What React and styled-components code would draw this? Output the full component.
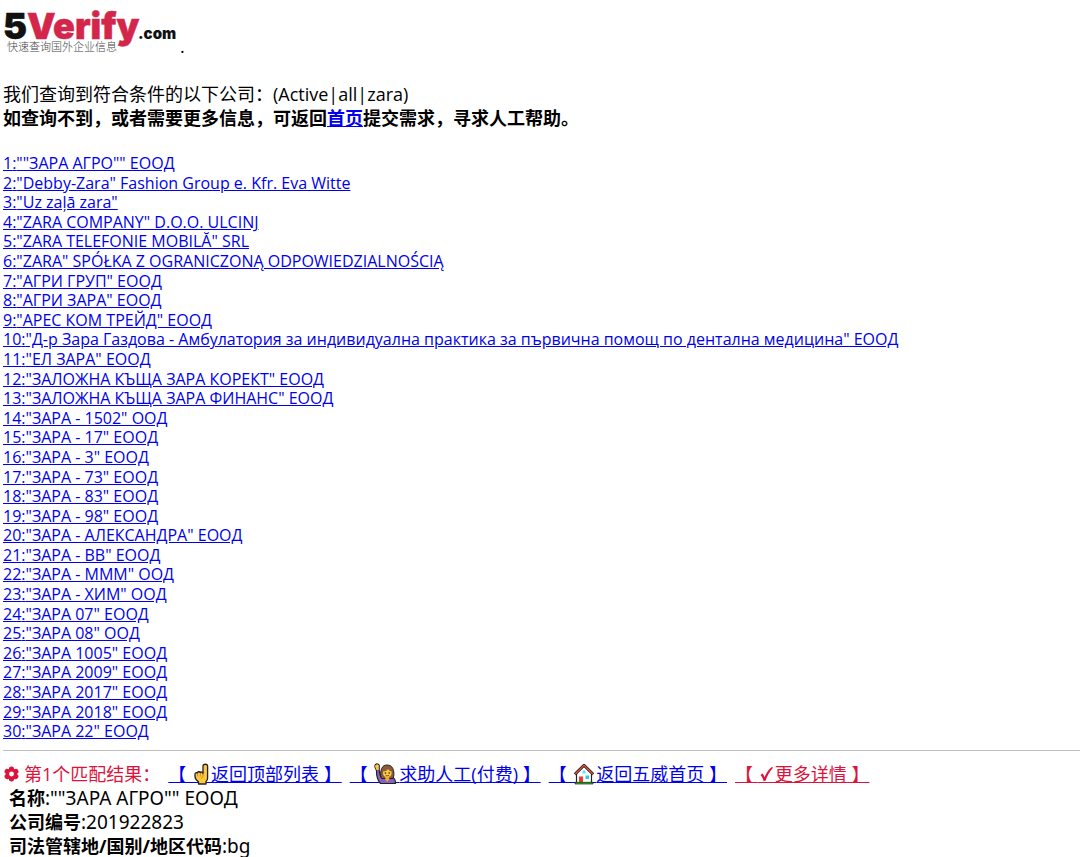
import React from "react";
import styled, { createGlobalStyle } from "styled-components";

const GlobalStyle = createGlobalStyle`
  body {
    margin: 0;
    background: #fff;
    color: #000;
    font-family: "Open Sans", "Noto Sans CJK SC", sans-serif;
    font-size: 18px;
    line-height: 24px;
  }
`;
const Page = styled.div`
  padding-left: 3px;
`;
const Header = styled.header`
  display: flex;
  align-items: flex-end;
  gap: 2px;
`;
const Logo = styled.svg`
  display: block;
  width: 175px;
  height: 58px;
  overflow: visible;
`;
const Intro = styled.div`
  margin-top: 24px;
  p {
    margin: 0;
  }
`;
const Link = styled.a`
  color: ${(props) => (props.$red ? "#dc143c" : "#0000ee")};
  text-decoration: underline;
`;
const List = styled.div`
  margin-top: 24px;
  font-size: 16px;
  line-height: 1.225;
`;
const Row = styled.div``;
const Divider = styled.hr`
  margin: 8px 0 11px;
  border: 0;
  border-top: 1px solid #c0c0c0;
`;
const ResultBar = styled.div`
  display: flex;
  align-items: center;
  gap: 8px;
  white-space: nowrap;
  color: #dc143c;
  a {
    text-decoration-skip-ink: none;
  }
`;
const Title = styled.span`
  display: flex;
  align-items: center;
  gap: 4px;
`;
const Icon = styled.svg`
  width: ${(props) => props.$w}px;
  height: 22px;
  vertical-align: -4px;
`;
const Detail = styled.div`
  padding-left: 6px;
  font-family: "Noto Sans", "Noto Sans CJK SC", sans-serif;
`;
const Value = styled.span`
  font-size: 19px;
`;

const companies = [
  '""ЗАРА АГРО"" ЕООД',
  '"Debby-Zara" Fashion Group e. Kfr. Eva Witte',
  '"Uz zaļā zara"',
  '"ZARA COMPANY" D.O.O. ULCINJ',
  '"ZARA TELEFONIE MOBILĂ" SRL',
  '"ZARA" SPÓŁKA Z OGRANICZONĄ ODPOWIEDZIALNOŚCIĄ',
  '"АГРИ ГРУП" ЕООД',
  '"АГРИ ЗАРА" ЕООД',
  '"АРЕС КОМ ТРЕЙД" ЕООД',
  '"Д-р Зара Газдова - Амбулатория за индивидуална практика за първична помощ по дентална медицина" ЕООД',
  '"ЕЛ ЗАРА" ЕООД',
  '"ЗАЛОЖНА КЪЩА ЗАРА КОРЕКТ" ЕООД',
  '"ЗАЛОЖНА КЪЩА ЗАРА ФИНАНС" ЕООД',
  '"ЗАРА - 1502" ООД',
  '"ЗАРА - 17" ЕООД',
  '"ЗАРА - 3" ЕООД',
  '"ЗАРА - 73" ЕООД',
  '"ЗАРА - 83" ЕООД',
  '"ЗАРА - 98" ЕООД',
  '"ЗАРА - АЛЕКСАНДРА" ЕООД',
  '"ЗАРА - ВВ" ЕООД',
  '"ЗАРА - МММ" ООД',
  '"ЗАРА - ХИМ" ООД',
  '"ЗАРА 07" ЕООД',
  '"ЗАРА 08" ООД',
  '"ЗАРА 1005" ЕООД',
  '"ЗАРА 2009" ЕООД',
  '"ЗАРА 2017" ЕООД',
  '"ЗАРА 2018" ЕООД',
  '"ЗАРА 22" ЕООД',
];

const Flower = () => (
  <Icon $w={17} viewBox="0 0 17 22" aria-hidden="true">
    <g fill="#dc143c">
      {[0, 60, 120, 180, 240, 300].map((a) => (
        <ellipse key={a} cx="8.5" cy="6.4" rx="2.7" ry="3" transform={`rotate(${a} 8.5 11)`} />
      ))}
    </g>
    <circle cx="8.5" cy="11" r="2.4" fill="#fff" />
  </Icon>
);

// carries the link underline behind an icon
const Underline = () => <path d="M-1 19.500h30" stroke="currentColor" strokeWidth="1" />;

const Hand = () => (
  <Icon $w={20} viewBox="-1 0 20 22" aria-hidden="true">
    <Underline />
    <path
      d="M11 10.5V3.2c0-2.6 4.6-2.6 4.6 0V15c0 1.4-.6 2.6-1.6 3.5V21H6.5v-2.3C4.3 17.2 3 15.5 3 13.5v-2.2c0-1.6 1.5-2 2.3-1.3.3-1.5 2.3-1.7 2.9-.4.6-1 2.4-.8 2.8.9z"
      fill="#ffc83d"
      stroke="#222"
      strokeWidth="1.3"
      strokeLinejoin="round"
    />
    <path d="M5.5 10.500v3M8.300 10.200v3.500M11 10.500v3.500l-2 1.500" fill="none" stroke="#b07a1e" strokeWidth=".7" />
  </Icon>
);

const Person = () => (
  <Icon $w={27} viewBox="-1 0 27 22" aria-hidden="true">
    <Underline />
    <path
      d="M7.5 20.500C5 18 3.400 13 3.500 7.500L2 4c-.6-2.300 1-3.200 2.200-3.100C6 1 6.600 2.500 6.200 4v3.500c.3 3 .8 5 1.800 6.500h10.500c3 .6 4 3 4 6.500z"
      fill="#8661c5"
      stroke="#222"
      strokeWidth="1.2"
      strokeLinejoin="round"
    />
    <path d="M3.5 7L2.300 4C1.800 2 3 1.300 4.200 1.400 5.700 1.500 6.100 2.600 5.700 4v3z" fill="#ffc83d" />
    <path
      d="M8.5 15.500C7 12 7.500 8 8.700 5.500 10 2.500 12 2 14 2s4.600.6 5.800 3.500c1.200 2.600 1.700 6.500.2 10z"
      fill="#8a5a3c"
      stroke="#222"
      strokeWidth="1"
    />
    <path d="M12.300 13h3.900v3.600L14.300 19l-2-2.400z" fill="#f2a91e" />
    <path d="M10 8.500c2.500 0 4.200-1 5-2.500 1 1.500 2 2.200 3.600 2.500v1.800c0 5.500-8.600 5.500-8.600 0z" fill="#ffc83d" />
    <circle cx="12.5" cy="10" r=".8" fill="#222" />
    <circle cx="16.2" cy="10" r=".8" fill="#222" />
    <path d="M12.700 12.300c1 .8 2.200.8 3.200 0" fill="none" stroke="#222" strokeWidth=".8" />
  </Icon>
);

const House = () => (
  <Icon $w={25} viewBox="-1 0 25 22" aria-hidden="true">
    <Underline />
    <path d="M4.500 10.500L12 3l7.500 7.500V20h-15z" fill="#fff" stroke="#222" strokeWidth="1.2" />
    <path d="M2.800 11.300L12 2.200l9.200 9.100" fill="none" stroke="#222" strokeWidth="2.800" strokeLinejoin="round" />
    <path d="M3.200 11L12 2.400l8.800 8.600" fill="none" stroke="#f0503c" strokeWidth="1.300" />
    <rect x="10.5" y="7.5" width="3" height="3" fill="#50e6ff" />
    <rect x="13.5" y="12.5" width="3.5" height="3.5" fill="#32c8f0" />
    <rect x="7" y="13.5" width="4" height="6" fill="#e8392f" />
    <path d="M3 19.300h18V21H3z" fill="#16c60c" stroke="#222" strokeWidth=".7" />
  </Icon>
);

const Check = () => (
  <Icon $w={17} viewBox="-1 0 17 22" aria-hidden="true">
    <Underline />
    <path
      d="M1.500 12l2-1.500c1 1 1.500 2.300 2 3.700C7.300 10 9.500 6.500 12.800 4l1.200.7C10.500 8.500 8.300 12.500 6.700 17.500l-2 .7C4 15.700 3 13.500 1.500 12z"
      fill="#dc143c"
    />
  </Icon>
);

const App = () => {
  return (
    <Page>
      <GlobalStyle />
      <Header id="top">
        <Logo viewBox="0 0 175 58" role="img" aria-label="5Verify.com">
          <g fontFamily="Inter, sans-serif" fontWeight="900">
            <text x="0" y="39" fontSize="36" fill="#111" stroke="#111" strokeWidth=".5">5</text>
            <text x="24" y="39" fontSize="36" fill="#d3264a" stroke="#d3264a" strokeWidth=".5">Verify</text>
            <text x="135" y="39" fontSize="15" fill="#111">.com</text>
          </g>
          <text x="4" y="51" fontFamily="Noto Sans CJK SC, sans-serif" fontWeight="300" fontSize="11" fill="#444">
            快速查询国外企业信息
          </text>
        </Logo>
        <span>.</span>
      </Header>
      <Intro>
        <p>我们查询到符合条件的以下公司：(Active|all|zara)</p>
        <p>
          <b>
            如查询不到，或者需要更多信息，可返回<Link href="#home">首页</Link>提交需求，寻求人工帮助。
          </b>
        </p>
      </Intro>
      <List>
        {companies.map((name, i) => (
          <Row key={i}>
            <Link href={"#" + (i + 1)}>
              {i + 1}:{name}
            </Link>
          </Row>
        ))}
      </List>
      <Divider />
      <ResultBar id="1">
        <Title>
          <Flower />
          第1个匹配结果：
        </Title>
        <Link href="#top">【 <Hand />返回顶部列表 】</Link>
        <Link href="#help">【 <Person />求助人工(付费) 】</Link>
        <Link href="#home">【 <House />返回五威首页 】</Link>
        <Link href="#more" $red>【 <Check />更多详情 】</Link>
      </ResultBar>
      <Detail>
        <b>名称</b>
        <Value>:""ЗАРА АГРО"" ЕООД</Value>
      </Detail>
      <Detail>
        <b>公司编号</b>
        <Value>:201922823</Value>
      </Detail>
      <Detail>
        <b>司法管辖地/国别/地区代码</b>
        <Value>:bg</Value>
      </Detail>
    </Page>
  );
};

export default App;
